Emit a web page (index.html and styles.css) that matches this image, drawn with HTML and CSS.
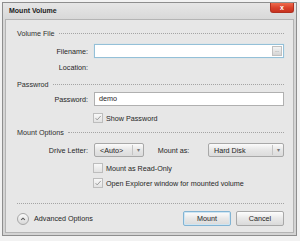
FILE: index.html
```html
<!doctype html>
<html lang="en">
<head>
<meta charset="utf-8">
<meta name="viewport" content="width=device-width,initial-scale=1">
<title>Mount Volume</title>
<link rel="stylesheet" href="styles.css">
</head>
<body>
<div class="window">
  <div class="titlebar">
    <span class="title">Mount Volume</span>
    <span class="close">x</span>
  </div>
  <div class="panel">
    <div class="sec s1"><span>Volume File</span><i></i></div>
    <div class="row r-file">
      <label>Filename:</label>
      <div class="input focus"><span class="browse">...</span></div>
    </div>
    <div class="row r-loc"><label>Location:</label></div>

    <div class="sec s2"><span>Passwrod</span><i></i></div>
    <div class="row r-pw">
      <label>Password:</label>
      <div class="input">demo</div>
    </div>
    <div class="check c-show">
      <span class="box on"><svg viewBox="0 0 10 10"><path d="M2 5.2l2 2.2 4.5-5"/></svg></span>Show Password
    </div>

    <div class="sec s3"><span>Mount Options</span><i></i></div>
    <div class="row r-drive">
      <label>Drive Letter:</label>
      <div class="combo small"><span>&lt;Auto&gt;</span><b>&#9662;</b></div>
      <label class="as">Mount as:</label>
      <div class="combo wide"><span>Hard Disk</span><b>&#9662;</b></div>
    </div>
    <div class="check c-ro"><span class="box"></span>Mount as Read-Only</div>
    <div class="check c-exp">
      <span class="box on"><svg viewBox="0 0 10 10"><path d="M2 5.2l2 2.2 4.5-5"/></svg></span>Open Explorer window for mounted volume
    </div>

    <div class="rule"></div>
    <div class="footer">
      <span class="adv"><svg viewBox="0 0 12 12"><path d="M3.8 7l2.2-2 2.2 2"/></svg></span>
      <span class="adv-text">Advanced Options</span>
      <button class="btn default">Mount</button>
      <button class="btn">Cancel</button>
    </div>
  </div>
</div>
</body>
</html>
```

FILE: styles.css
```css
*{box-sizing:border-box}
body{margin:0;background:#f2f2f2;font-family:"Liberation Sans",Arial,sans-serif;font-size:7.2px;color:#222}
.window{margin:2px 0 0 2px;width:295px;height:234px;border:1px solid #8e8e8e;background:linear-gradient(#e6e6e6,#d6d6d6 8%,#d4d4d4);display:flex;flex-direction:column}
.titlebar{height:16px;display:flex;align-items:flex-start;padding-left:6px}
.title{font-weight:700;font-size:7px;line-height:13px;margin-top:1px;color:#222}
.close{margin-left:auto;margin-right:2px;width:24px;height:10px;border-radius:0 0 3px 3px;background:linear-gradient(#f06a4c,#d8402a 55%,#c8321f);color:#fff;font-weight:700;font-size:7px;line-height:9px;text-align:center;border:1px solid #b03020;border-top:0}
.panel{margin:0 2px 2px 2px;flex:1;border:1px solid #b4b4b4;background:#e7e7e7;padding:7px 9px 0 11px;display:flex;flex-direction:column}
.sec{height:12px;display:flex;align-items:center;color:#2e2e2e}
.sec i{flex:1;margin-left:4px;border-top:1px dotted #a4a4a4;margin-top:1px}
.s2{margin-top:4px}.s3{margin-top:2px}
.row{display:flex;align-items:center;height:14px}
.row label{width:71px;text-align:right;margin-right:6px;color:#262626}
.r-file{margin-top:5px}.r-loc{margin-top:2px}
.r-pw{margin-top:2px}.r-drive{margin-top:5px}
.input{flex:1;height:14px;background:#fff;border:1px solid #b0b0b0;padding:0 4px;line-height:12px;display:flex;align-items:center;color:#1e1e1e}
.input.focus{border-color:#94c0d8;box-shadow:0 0 1px #b8d8e8}
.browse{margin-left:auto;margin-right:-3px;width:10px;height:10px;border:1px solid #c0c0c0;background:linear-gradient(#f4f4f4,#d4d4d4);font-size:5px;line-height:6px;text-align:center;color:#777}
.check{display:flex;align-items:center;height:12px;padding-left:76px;color:#262626}
.c-show{margin-top:6px}.c-ro{margin-top:5px}.c-exp{margin-top:3px}
.box{width:10px;height:10px;border:1px solid #bdbdbd;background:linear-gradient(#f8f8f8,#e2e2e2);margin-right:3px;display:flex}
.box svg{width:10px;height:10px;margin:-1px 0 0 0}
.box path{fill:none;stroke:#999;stroke-width:1.2}
.combo{height:14px;border:1px solid #a8a8a8;border-radius:2px;background:linear-gradient(#fbfbfb,#e6e6e6 50%,#dcdcdc);display:flex;align-items:center;color:#1e1e1e}
.combo span{flex:1;padding-left:5px}
.combo b{width:11px;border-left:1px solid #c4c4c4;height:10px;font-weight:400;font-size:6px;line-height:10px;text-align:center;color:#777}
.combo.small{width:50px}
.combo.wide{width:76px;margin-left:auto}
.row label.as{width:auto;margin-right:5px;margin-left:auto}
.rule{margin-top:14px;border-top:1px dotted #a4a4a4}
.footer{margin-top:7px;display:flex;align-items:center;height:15px}
.adv{width:12px;height:12px;border-radius:50%;border:1px solid #a8a8a8;background:linear-gradient(#fafafa,#d8d8d8);display:flex}
.adv svg{width:10px;height:10px}
.adv path{fill:none;stroke:#555;stroke-width:1.3}
.adv-text{margin-left:5px;color:#262626}
.btn{font:inherit;width:48px;height:15px;border:1px solid #a8a8a8;border-radius:2px;background:linear-gradient(#fdfdfd,#e8e8e8 50%,#dadada);color:#1e1e1e;padding:0}
.btn.default{margin-left:auto;border-color:#82b4d4;box-shadow:inset 0 0 0 1px #cfe5f2}
.btn+.btn{margin-left:5px}
```
